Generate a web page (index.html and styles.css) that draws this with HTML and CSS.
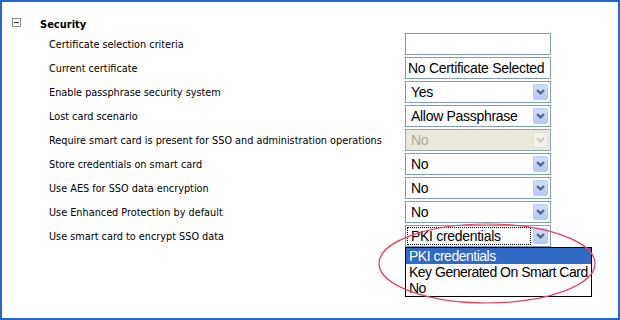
FILE: index.html
```html
<!DOCTYPE html>
<html>
<head>
<meta charset="utf-8">
<link rel="stylesheet" href="styles.css">
</head>
<body>
<div class="frame">
  <div class="section-head">
    <span class="toggle"><span class="toggle-bar"></span></span>
    <span class="section-title">Security</span>
  </div>
  <div class="rows">
    <div class="label">Certificate selection criteria</div>
    <div class="field input"></div>

    <div class="label">Current certificate</div>
    <div class="field input"><span class="val tight">No Certificate Selected</span></div>

    <div class="label">Enable passphrase security system</div>
    <div class="field select"><span class="val">Yes</span><span class="btn"><svg width="9" height="6" viewBox="0 0 9 6"><path d="M1 1 L4.5 4.5 L8 1" fill="none" stroke="#4d6185" stroke-width="2"/></svg></span></div>

    <div class="label">Lost card scenario</div>
    <div class="field select"><span class="val">Allow Passphrase</span><span class="btn"><svg width="9" height="6" viewBox="0 0 9 6"><path d="M1 1 L4.5 4.5 L8 1" fill="none" stroke="#4d6185" stroke-width="2"/></svg></span></div>

    <div class="label">Require smart card is present for SSO and administration operations</div>
    <div class="field select disabled"><span class="val">No</span><span class="btn"><svg width="9" height="6" viewBox="0 0 9 6"><path d="M1 1 L4.5 4.5 L8 1" fill="none" stroke="#c9c7ba" stroke-width="2"/></svg></span></div>

    <div class="label">Store credentials on smart card</div>
    <div class="field select"><span class="val">No</span><span class="btn"><svg width="9" height="6" viewBox="0 0 9 6"><path d="M1 1 L4.5 4.5 L8 1" fill="none" stroke="#4d6185" stroke-width="2"/></svg></span></div>

    <div class="label">Use AES for SSO data encryption</div>
    <div class="field select"><span class="val">No</span><span class="btn"><svg width="9" height="6" viewBox="0 0 9 6"><path d="M1 1 L4.5 4.5 L8 1" fill="none" stroke="#4d6185" stroke-width="2"/></svg></span></div>

    <div class="label">Use Enhanced Protection by default</div>
    <div class="field select"><span class="val">No</span><span class="btn"><svg width="9" height="6" viewBox="0 0 9 6"><path d="M1 1 L4.5 4.5 L8 1" fill="none" stroke="#4d6185" stroke-width="2"/></svg></span></div>

    <div class="label">Use smart card to encrypt SSO data</div>
    <div class="field select open"><span class="val focus">PKI credentials</span><span class="btn"><svg width="9" height="6" viewBox="0 0 9 6"><path d="M1 1 L4.5 4.5 L8 1" fill="none" stroke="#4d6185" stroke-width="2"/></svg></span>
      <ul class="listbox">
        <li class="opt selected">PKI credentials</li>
        <li class="opt">Key Generated On Smart Card</li>
        <li class="opt">No</li>
      </ul>
    </div>
  </div>
  <svg class="callout" width="620" height="320" viewBox="0 0 620 320">
    <ellipse cx="487" cy="263.5" rx="108" ry="39.5" fill="none" stroke="#e8415e" stroke-width="1.2"/>
  </svg>
</div>
</body>
</html>
```
FILE: styles.css
```css
html, body {
  margin: 0;
  padding: 0;
  background: #ffffff;
}

.frame {
  position: relative;
  width: 620px;
  height: 320px;
  box-sizing: border-box;
  border: 2px solid #2467d8;
  background: #ffffff;
  font-family: "DejaVu Sans Condensed", "DejaVu Sans", sans-serif;
  font-stretch: condensed;
  color: #000000;
}

.section-head {
  display: flex;
  align-items: center;
  height: 14px;
  padding: 15px 0 0 10px;
}

.toggle {
  position: relative;
  width: 9px;
  height: 9px;
  box-sizing: border-box;
  border: 1px solid #8c8c8c;
  background: #ffffff;
  margin-top: -3px;
}

.toggle-bar {
  position: absolute;
  left: 1px;
  top: 3px;
  width: 5px;
  height: 1px;
  background: #333333;
}

.section-title {
  margin-left: 19px;
  padding-top: 2px;
  font-weight: bold;
  font-size: 11px;
  line-height: 14px;
}

.rows {
  display: grid;
  grid-template-columns: 356px 146px;
  grid-auto-rows: 22px;
  row-gap: 2px;
  margin: 2px 0 0 47px;
}

.label {
  padding-top: 1px;
  font-size: 10.8px;
  line-height: 22px;
  white-space: nowrap;
}

.field {
  position: relative;
  display: flex;
  align-items: center;
  height: 22px;
  box-sizing: border-box;
  border: 1px solid #7f9db9;
  background: #ffffff;
  font-family: "Liberation Sans", Arial, sans-serif;
  font-stretch: normal;
  font-size: 14px;
  letter-spacing: -0.3px;
}

.val {
  flex: 1;
  padding-left: 5px;
  white-space: nowrap;
  line-height: 18px;
}

.val.tight {
  padding-left: 2px;
}

.btn {
  display: flex;
  align-items: center;
  justify-content: center;
  width: 15px;
  height: 16px;
  margin-right: 2px;
  box-sizing: border-box;
  border: 1px solid #b7cbf5;
  border-radius: 2px;
  background: linear-gradient(#cfdcfd, #b5c9f8);
}

.disabled {
  background: #ebe9dc;
  border-color: #8fa7c0;
}

.disabled .val {
  color: #aca899;
}

.disabled .btn {
  background: #f3f2ec;
  border-color: #e2e0d6;
}

.val.focus {
  margin: 0 2px 0 1px;
  padding-left: 3px;
  line-height: 16px;
  border: 1px dotted #000000;
}

.listbox {
  position: absolute;
  left: -1px;
  top: 21px;
  width: 187px;
  margin: 0;
  padding: 0;
  list-style: none;
  box-sizing: border-box;
  border: 1px solid #000000;
  background: #ffffff;
  z-index: 2;
}

.opt {
  height: 16px;
  line-height: 16px;
  padding-left: 3px;
  white-space: nowrap;
  letter-spacing: -0.5px;
}

.opt.selected {
  background: #316ac5;
  color: #ffffff;
}

.callout {
  position: absolute;
  left: -2px;
  top: -2px;
  pointer-events: none;
  z-index: 3;
}
```
